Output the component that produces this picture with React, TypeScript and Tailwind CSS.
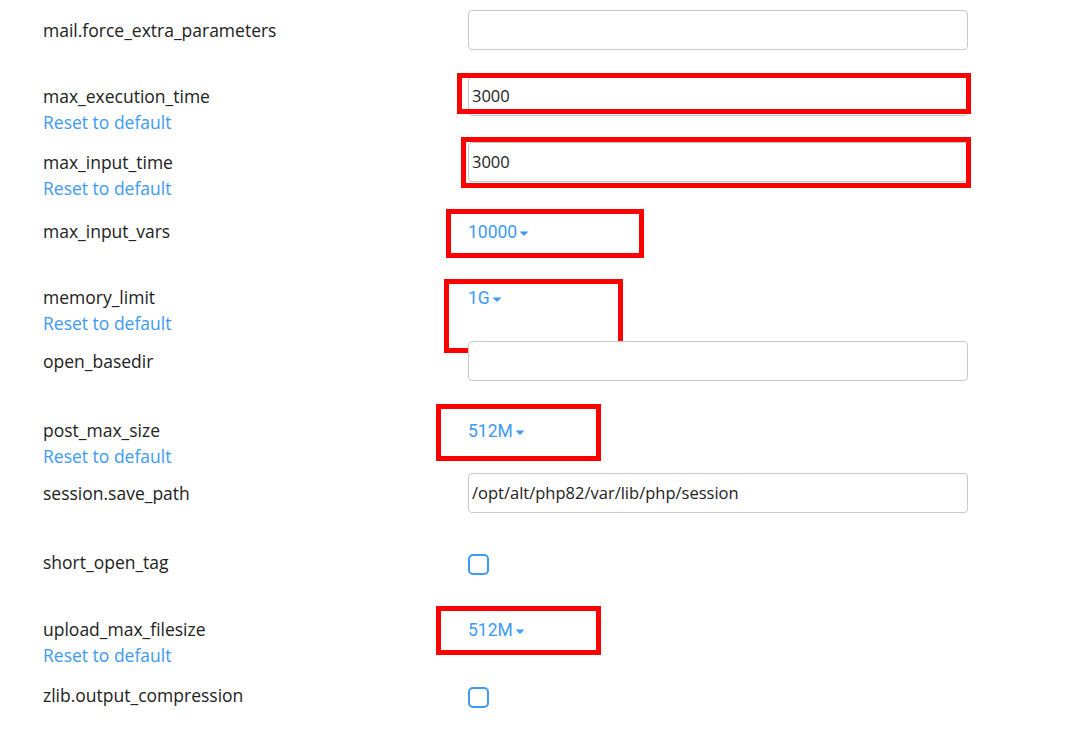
import React from "react";

type Row = {
  name: string;
  kind: "text" | "select" | "check";
  value?: string;
  reset?: boolean;
  h: string;
  mark?: string;
};

const rows: Row[] = [
  { name: "mail.force_extra_parameters", kind: "text", value: "", h: "h-[66px]" },
  { name: "max_execution_time", kind: "text", value: "3000", reset: true, h: "h-[66px]", mark: "left-[-11px] top-[-3px] w-[514px] h-[41px]" },
  { name: "max_input_time", kind: "text", value: "3000", reset: true, h: "h-[69px]", mark: "left-[-7px] top-[-5px] w-[510px] h-[51px]" },
  { name: "max_input_vars", kind: "select", value: "10000", h: "h-[66px]", mark: "left-[-22px] top-[-2px] w-[198px] h-[49px]" },
  { name: "memory_limit", kind: "select", value: "1G", reset: true, h: "h-[64px]", mark: "left-[-24px] top-[2px] w-[179px] h-[74px]" },
  { name: "open_basedir", kind: "text", value: "", h: "h-[69px]" },
  { name: "post_max_size", kind: "select", value: "512M", reset: true, h: "h-[63px]", mark: "left-[-32px] top-[-6px] w-[165px] h-[57px]" },
  { name: "session.save_path", kind: "text", value: "/opt/alt/php82/var/lib/php/session", h: "h-[69px]" },
  { name: "short_open_tag", kind: "check", h: "h-[67px]" },
  { name: "upload_max_filesize", kind: "select", value: "512M", reset: true, h: "h-[66px]", mark: "left-[-32px] top-[-3px] w-[165px] h-[49px]" },
  { name: "zlib.output_compression", kind: "check", h: "h-[62px]" },
];

function Control({ row }: { row: Row }) {
  if (row.kind === "text") {
    return (
      <div className="w-[500px] h-10 border border-[#c8c8c8] rounded-[4px] bg-white flex items-center px-[3px] text-[16.5px] text-[#222]">
        {row.value}
      </div>
    );
  }
  if (row.kind === "select") {
    return (
      <div className="h-[42px] flex items-center text-[17.5px] text-[#3d9af5] font-['Roboto',sans-serif]">
        {row.value}
        <svg width="12" height="7" viewBox="0 0 12 7" className="ml-[1px] mt-[2px]">
          <path d="M1.5 1.5h9L6 6z" fill="#3d9af5" />
        </svg>
      </div>
    );
  }
  return (
    <div className="pt-3">
      <div className="w-[21px] h-[21px] border-2 border-[#3d9af5] rounded-[5px]" />
    </div>
  );
}

export default function App() {
  return (
    <div className="w-[1079px] h-[737px] bg-white overflow-hidden pt-[10px] font-['Open_Sans',sans-serif]">
      {rows.map((row) => (
        <div key={row.name} className={`flex ${row.h}`}>
          <div className="w-[468px] pl-[43px] pt-[7px] text-[17.5px] leading-[26px]">
            <div className="text-[#222]">{row.name}</div>
            {row.reset && <div className="text-[#3d9af5]">Reset to default</div>}
          </div>
          <div className="relative">
            <Control row={row} />
            {row.mark && <div className={`absolute border-[5px] border-[#ff0000] ${row.mark}`} />}
          </div>
        </div>
      ))}
    </div>
  );
}
